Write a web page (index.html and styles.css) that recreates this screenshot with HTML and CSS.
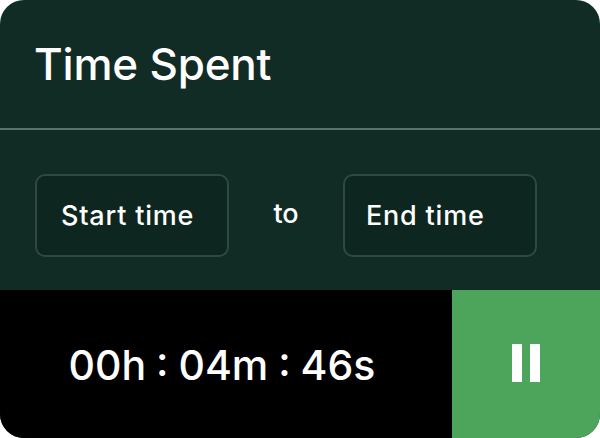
FILE: index.html
```html
<!DOCTYPE html>
<html lang="en">
<head>
  <meta charset="UTF-8">
  <title>Time Spent</title>
  <link rel="stylesheet" href="styles.css">
</head>
<body>
  <div class="card">
    <div class="card-header">
      <h1>Time Spent</h1>
    </div>
    <div class="range">
      <div class="time-field">Start time</div>
      <span class="range-sep">to</span>
      <div class="time-field time-field-end">End time</div>
    </div>
    <div class="timer-bar">
      <div class="timer">00h : 04m : 46s</div>
      <button class="pause-btn" aria-label="Pause">
        <span class="bar"></span>
        <span class="bar"></span>
      </button>
    </div>
  </div>
</body>
</html>
```

FILE: styles.css
```css
body {
  margin: 0;
  background: #fff;
  font-family: Inter, 'Noto Sans', sans-serif;
  color: #fff;
}
.card {
  width: 600px;
  height: 438px;
  border-radius: 24px;
  overflow: hidden;
  background-color: #112b25;
  display: flex;
  flex-direction: column;
}
.card-header {
  height: 128px;
  border-bottom: 2px solid #56756b;
  display: flex;
  align-items: center;
  padding-left: 34px;
}
h1 {
  margin: 0;
  font-size: 44px;
  font-weight: 500;
  letter-spacing: -0.2px;
}
.range {
  height: 160px;
  display: flex;
  align-items: flex-start;
  padding: 44px 35px 0;
  box-sizing: border-box;
}
.time-field {
  width: 194px;
  height: 83px;
  box-sizing: border-box;
  border: 2px solid #2c4a41;
  border-radius: 10px;
  background-color: #0e2620;
  display: flex;
  align-items: center;
  padding-left: 24px;
  font-size: 27px;
  font-weight: 500;
  letter-spacing: 0.8px;
}
.time-field-end {
  padding-left: 21px;
}
.range-sep {
  width: 114px;
  text-align: center;
  font-size: 27px;
  font-weight: 500;
  line-height: 80px;
}
.timer-bar {
  flex: 1;
  display: flex;
}
.timer {
  flex: 1;
  background: #000;
  display: flex;
  align-items: center;
  justify-content: center;
  font-size: 41px;
  font-weight: 500;
  word-spacing: -1px;
  padding: 2px 8px 0 0;
}
.pause-btn {
  width: 148px;
  border: none;
  background-color: #4da55b;
  display: flex;
  align-items: center;
  justify-content: center;
  gap: 8px;
  padding: 0 0 2px;
}
.bar {
  width: 10px;
  height: 38px;
  background: #fff;
}
```
